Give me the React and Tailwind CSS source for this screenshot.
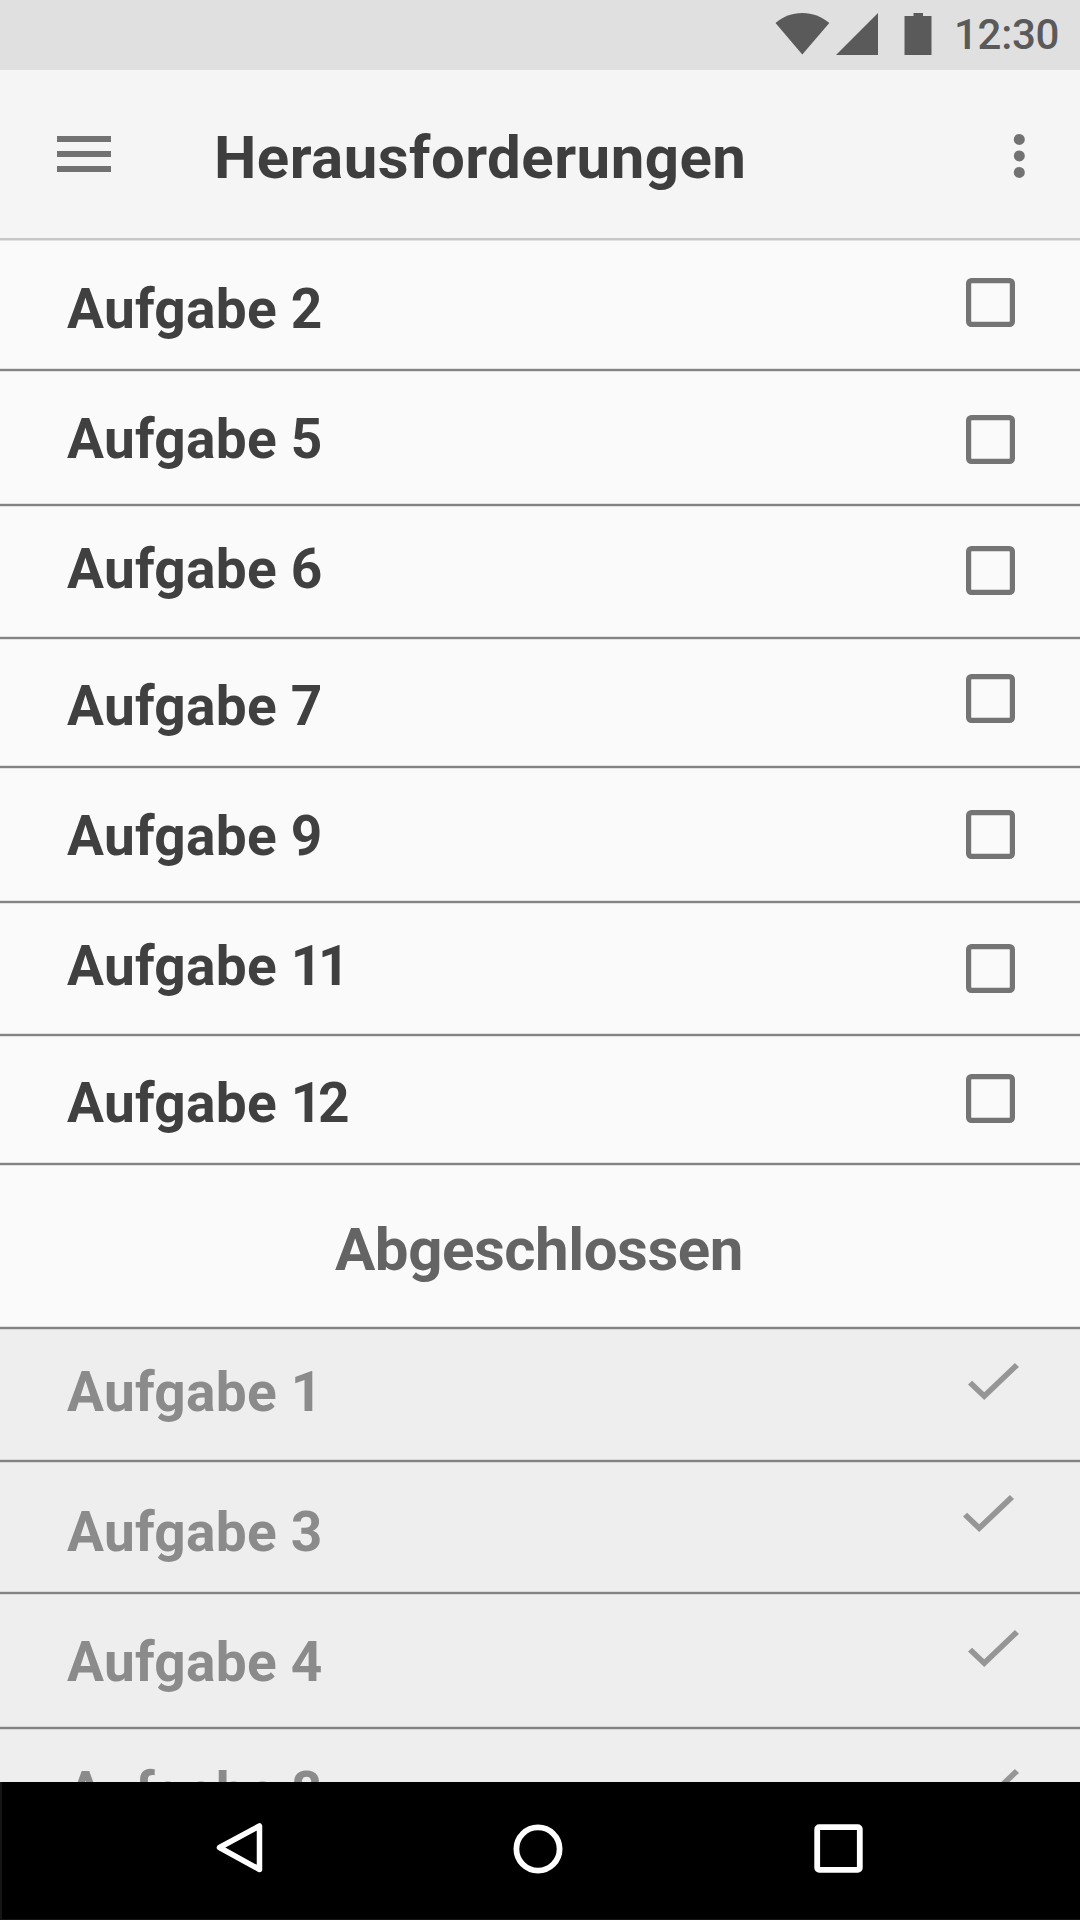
const openTasks = [
  { number: '2', row: 'h-[131px]', text: 'mt-[37px]', icon: 'mt-[38px]' },
  { number: '5', row: 'h-[135px]', text: 'mt-[36px]', icon: 'mt-[44px]' },
  { number: '6', row: 'h-[133px]', text: 'mt-[31px]', icon: 'mt-[40px]' },
  { number: '7', row: 'h-[129px]', text: 'mt-[35px]', icon: 'mt-[35px]' },
  { number: '9', row: 'h-[135px]', text: 'mt-[36px]', icon: 'mt-[42px]' },
  { number: '11', row: 'h-[133px]', text: 'mt-[31px]', icon: 'mt-[41px]' },
  { number: '12', row: 'h-[129px]', text: 'mt-[35px]', icon: 'mt-[38px]' },
];

const doneTasks = [
  { number: '1', row: 'h-[133px]', text: 'mt-[31px]', icon: 'mt-[34px] mr-[61px]' },
  { number: '3', row: 'h-[132px]', text: 'mt-[38px]', icon: 'mt-[33px] mr-[66px]' },
  { number: '4', row: 'h-[135px]', text: 'mt-[36px]', icon: 'mt-[36px] mr-[61px]' },
  { number: '8', row: 'h-[135px]', text: 'mt-[31px]', icon: 'mt-[40px] mr-[61px]' },
];

function StatusBar() {
  return (
    <div className="flex h-[70px] shrink-0 items-start justify-end bg-[#e0e0e0] pr-[21px] text-[#5a5a5a]">
      <svg className="mt-[13px] h-[42px] w-[55px]" viewBox="0 0 55 42" fill="currentColor">
        <path d="M0.5 10C8 3.5 17 0 27.3 0S46.500 3.500 54.300 10L27.300 41.500Z" />
      </svg>
      <svg className="mt-[13px] ml-[6px] h-[42px] w-[42px]" viewBox="0 0 42 42" fill="currentColor">
        <path d="M0 42L42 0V42Z" />
      </svg>
      <svg className="mt-[13px] ml-[26px] h-[42px] w-[28px]" viewBox="0 0 28 42" fill="currentColor">
        <path d="M9.500 0H19V3H27.500V42H0.500V3H9.500Z" />
      </svg>
      <span className="mt-[11px] ml-[22px] w-[105px] whitespace-nowrap text-[42px] leading-[48px] font-medium tracking-[-0.3px]">
        12:30
      </span>
    </div>
  );
}

function AppBar() {
  return (
    <header className="flex h-[170px] shrink-0 items-start border-b-2 border-[#c6c6c6] bg-[#f5f5f5]">
      <div className="mt-[66px] ml-[57px] flex w-[54px] flex-col gap-[9px]">
        <span className="h-[6px] bg-[#727272]" />
        <span className="h-[6px] bg-[#727272]" />
        <span className="h-[6px] bg-[#727272]" />
      </div>
      <h1 className="mt-[53px] ml-[103px] grow text-[60px] leading-[70px] font-bold tracking-[0.45px] text-[#3e3e3e]">
        Herausforderungen
      </h1>
      <svg className="mt-[63px] mr-[55px] h-[46px] w-[12px]" viewBox="0 0 12 46" fill="#727272">
        <circle cx="6.300" cy="6.400" r="5.500" />
        <circle cx="6.300" cy="22.900" r="5.500" />
        <circle cx="6.300" cy="39.400" r="5.500" />
      </svg>
    </header>
  );
}

function Checkbox({ className }) {
  return (
    <svg className={`mr-[65px] h-[49px] w-[49px] shrink-0 ${className}`} viewBox="0 0 18 18" fill="none">
      <rect x="1" y="1" width="16" height="16" rx="1" stroke="#747474" strokeWidth="2" />
      <path d="M2 2H16V16H2Z" fill="#fafafa" />
    </svg>
  );
}

function Check({ className }) {
  return (
    <svg
      className={`h-[37px] w-[51px] shrink-0 ${className}`}
      viewBox="3.410 5.590 17.590 13.410"
      preserveAspectRatio="none"
      fill="#969696"
    >
      <path d="M9 16.170L4.830 12l-1.420 1.410L9 19 21 7l-1.410-1.410z" />
    </svg>
  );
}

function Row({ task, done }) {
  return (
    <li
      className={`flex shrink-0 items-start justify-between border-b-2 border-[#838383] pl-[67px] text-[55px] leading-[64px] font-bold tracking-[0.27px] ${task.row} ${
        done
          ? 'bg-[#eeeeee] text-[#8b8b8b] shadow-[inset_0_1px_#d8d8d8,inset_0_-1px_#d8d8d8]'
          : 'bg-[#fafafa] text-[#404040] shadow-[inset_0_1px_#e2e2e2,inset_0_-1px_#e2e2e2]'
      }`}
    >
      <span className={task.text}>
        Aufgabe <span className="tracking-[-4.5px]">{task.number}</span>
      </span>
      {done ? <Check className={task.icon} /> : <Checkbox className={task.icon} />}
    </li>
  );
}

function NavBar() {
  return (
    <nav className="flex h-[138px] shrink-0 items-start border-b border-l-2 border-[#151515] bg-black">
      <svg className="mt-[39px] ml-[213px] h-[54px] w-[50px]" viewBox="0 0 50 54" fill="none" stroke="#fff" strokeWidth="5.500" strokeLinejoin="round">
        <path d="M44.500 5V48.500L4.500 26.500Z" />
      </svg>
      <svg className="mt-[42px] ml-[248px] h-[50px] w-[50px]" viewBox="0 0 50 50" fill="none" stroke="#fff" strokeWidth="5.800">
        <circle cx="25" cy="25" r="21.600" />
      </svg>
      <svg className="mt-[42px] ml-[251px] h-[49px] w-[49px]" viewBox="0 0 49 49" fill="none" stroke="#fff" strokeWidth="5.800">
        <rect x="3.200" y="3.200" width="42.600" height="42.600" rx="2" />
      </svg>
    </nav>
  );
}

export default function App() {
  return (
    <div className="flex h-[1920px] w-[1080px] flex-col overflow-hidden bg-[#fafafa] font-['Roboto',sans-serif]">
      <StatusBar />
      <AppBar />
      <main className="flex min-h-0 grow flex-col overflow-hidden">
        <ul className="flex shrink-0 flex-col">
          {openTasks.map((task) => (
            <Row key={task.number} task={task} />
          ))}
        </ul>
        <h2 className="h-[164px] shrink-0 border-b-2 border-[#838383] pt-[50px] pr-[2px] text-center text-[60px] leading-[70px] font-bold tracking-[-0.45px] text-[#646464] shadow-[inset_0_1px_#e2e2e2,inset_0_-1px_#e2e2e2]">
          Abgeschlossen
        </h2>
        <ul className="flex shrink-0 flex-col">
          {doneTasks.map((task) => (
            <Row key={task.number} task={task} done />
          ))}
        </ul>
      </main>
      <NavBar />
    </div>
  );
}
